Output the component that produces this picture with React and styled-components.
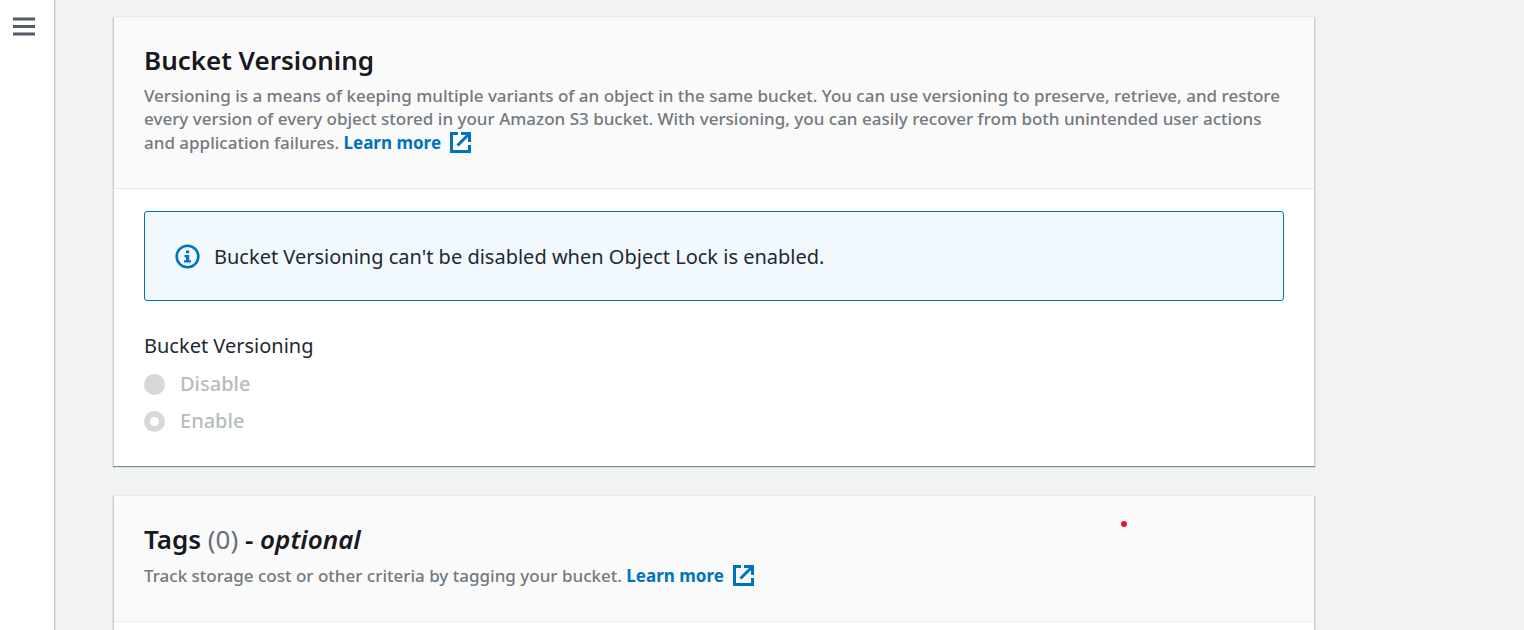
import React from "react";
import styled, { createGlobalStyle } from "styled-components";

const GlobalStyle = createGlobalStyle`
  * { box-sizing: border-box; }
  body {
    margin: 0;
    background: #f1f2f2;
    color: #16191f;
    font-family: "Noto Sans", "Open Sans", sans-serif;
    font-size: 20px;
  }
`;

const Page = styled.div`
  display: flex;
  height: 100vh;
  overflow: hidden;
`;

const Sidebar = styled.nav`
  flex: 0 0 55px;
  padding: 12px 9px;
  background: #fff;
  border-right: 1px solid #c4c8c8;
  box-shadow: 1px 0 1px #dfe2e2;
`;

const MenuButton = styled.button`
  display: flex;
  padding: 0;
  border: 0;
  background: none;
  cursor: pointer;
`;

const Main = styled.main`
  position: relative;
  flex: 1;
  display: flex;
  flex-direction: column;
  gap: 30px;
  padding: 17px 209px 0 58px;
`;

const Card = styled.section`
  flex: none;
  background: #fff;
  border: solid #cdd1d1;
  border-width: 0 1px;
  box-shadow: 0 -1px 0 #e9ebeb, 0 1px 1px #7f8a8b;
`;

const CardHeader = styled.header`
  padding: 28px 30px 33px;
  background: #fafafa;
  border-bottom: 1px solid #eaeded;
`;

const Title = styled.h2`
  margin: 0 0 9px;
  font-size: 26px;
  font-weight: 600;
  line-height: 30px;
`;

const Counter = styled.span`
  color: #687078;
  font-weight: 400;
`;

const Description = styled.p`
  margin: 0;
  color: #72797f;
  font-size: 17px;
  font-weight: 500;
  line-height: 23px;
`;

const Link = styled.a`
  display: inline-flex;
  align-items: center;
  gap: 8px;
  color: #0073bb;
  font-weight: 700;
  line-height: 25px;
  text-decoration: none;
  vertical-align: baseline;
`;

const CardBody = styled.div`
  padding: 22px 30px 30px;
`;

const Alert = styled.div`
  display: flex;
  align-items: center;
  gap: 14px;
  height: 90px;
  padding: 0 30px;
  background: #f1f9ff;
  border: 1px solid #0073bb;
  border-radius: 3px;
  color: #24282e;
`;

const Fieldset = styled.fieldset`
  margin: 30px 0 0;
  padding: 0;
  border: 0;
`;

const Legend = styled.legend`
  padding: 0;
  margin-bottom: 8px;
  color: #24282e;
  line-height: 30px;
`;

const Option = styled.label`
  display: flex;
  align-items: center;
  gap: 15px;
  color: #b4bcc0;
  font-weight: 500;
  line-height: 30px;
  & + & {
    margin-top: 7px;
  }
`;

const Radio = styled.input`
  appearance: none;
  width: 21px;
  height: 21px;
  margin: 0;
  border-radius: 50%;
  background: #d8d8d8;
  &:checked {
    background: #fff;
    border: 6px solid #d8d8d8;
  }
`;

const Pointer = styled.span`
  position: absolute;
  left: 1066px;
  top: 521px;
  width: 6px;
  height: 6px;
  border-radius: 50%;
  background: #e8171f;
`;

const ExternalIcon = () => (
  <svg width="23" height="23" viewBox="0 0 23 23" fill="none" stroke="#0073bb" strokeWidth="3" aria-hidden="true">
    <path d="M9 2.500H2.500V20.500H20.500V14" />
    <path d="M12 2.500H20.500V11M20 3L8.500 14.500" />
  </svg>
);

const InfoIcon = () => (
  <svg width="25" height="25" viewBox="0 0 25 25" fill="none" stroke="#0073bb" aria-hidden="true">
    <circle cx="12.500" cy="12.500" r="10.800" strokeWidth="2.600" />
    <path d="M11 6.500h3.200v2.800H11zM9.500 11h4.700v5.200h1.800v2.300H9v-2.300h2v-2.900H9.500z" fill="#0073bb" stroke="none" />
  </svg>
);

const MenuIcon = () => (
  <svg width="30" height="30" viewBox="0 0 30 30" stroke="#545b64" strokeWidth="3" aria-hidden="true">
    <path d="M4 7h22M4 14.500h22M4 22h22" />
  </svg>
);

const LearnMore = () => (
  <Link href="#">
    Learn more
    <ExternalIcon />
  </Link>
);

export default function App() {
  return (
    <>
      <GlobalStyle />
      <Page>
        <Sidebar>
          <MenuButton type="button" aria-label="Open navigation">
            <MenuIcon />
          </MenuButton>
        </Sidebar>
        <Main>
          <Card>
            <CardHeader>
              <Title>Bucket Versioning</Title>
              <Description>
                Versioning is a means of keeping multiple variants of an object in the same bucket. You can use versioning to preserve, retrieve, and restore
                <br />
                every version of every object stored in your Amazon S3 bucket. With versioning, you can easily recover from both unintended user actions
                <br />
                and application failures. <LearnMore />
              </Description>
            </CardHeader>
            <CardBody>
              <Alert role="status">
                <InfoIcon />
                <span>Bucket Versioning can't be disabled when Object Lock is enabled.</span>
              </Alert>
              <Fieldset disabled>
                <Legend>Bucket Versioning</Legend>
                <Option>
                  <Radio type="radio" name="versioning" value="disable" />
                  Disable
                </Option>
                <Option>
                  <Radio type="radio" name="versioning" value="enable" defaultChecked />
                  Enable
                </Option>
              </Fieldset>
            </CardBody>
          </Card>
          <Card>
            <CardHeader>
              <Title>
                Tags <Counter>(0)</Counter> - <i>optional</i>
              </Title>
              <Description>
                Track storage cost or other criteria by tagging your bucket. <LearnMore />
              </Description>
            </CardHeader>
            <CardBody />
          </Card>
          <Pointer />
        </Main>
      </Page>
    </>
  );
}
